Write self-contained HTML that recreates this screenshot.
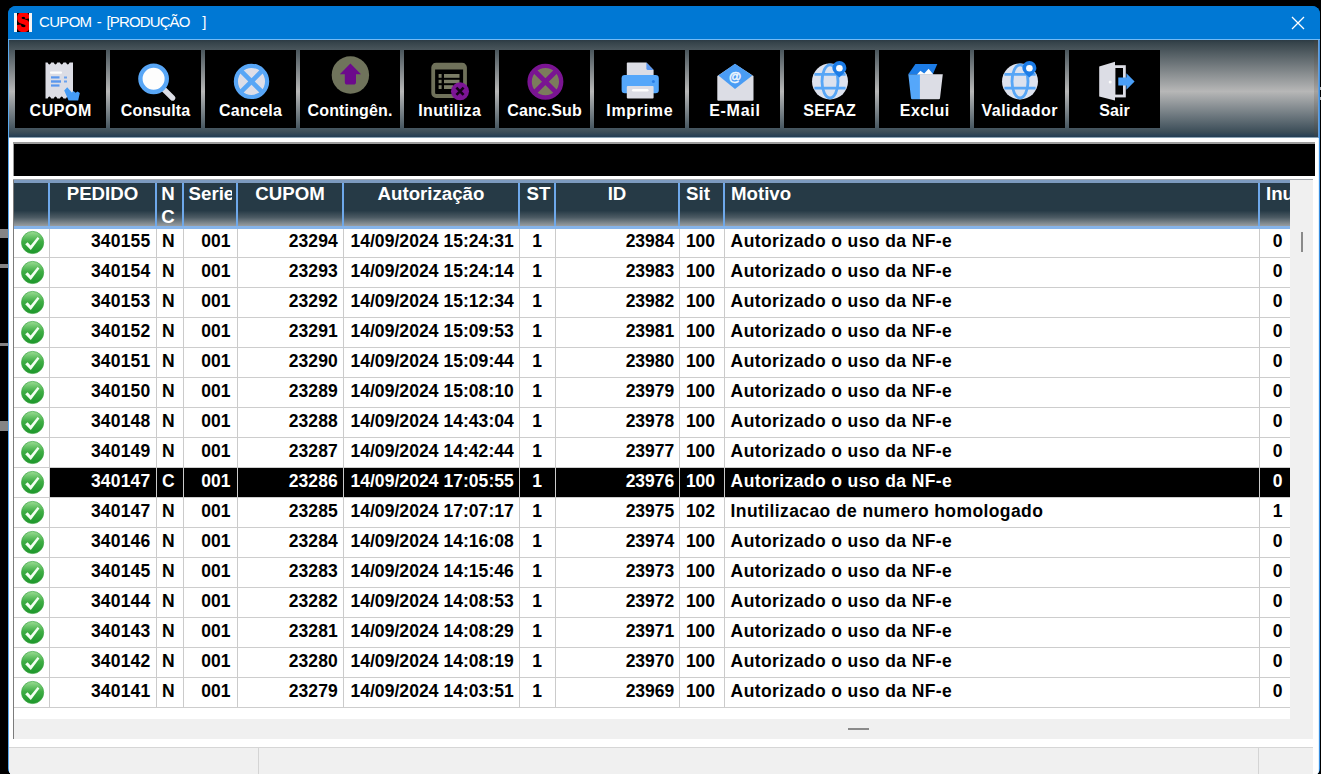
<!DOCTYPE html>
<html lang="pt-BR">
<head>
<meta charset="utf-8">
<title>CUPOM - [PRODUÇÃO   ]</title>
<style>
html,body{margin:0;padding:0;background:#000;}
body{width:1321px;height:774px;overflow:hidden;position:relative;font-family:"Liberation Sans",sans-serif;}
.bgm{position:absolute;left:0;width:8px;background:#858585;}
.bgr{position:absolute;left:1320px;width:1px;height:3px;background:#b8b8b8;}
.win{position:absolute;left:8px;top:6px;width:1312px;height:770px;border-radius:8px;overflow:hidden;background:#0078d4;}
.win>*{position:absolute;}
.titlebar{left:0;top:0;width:1312px;height:33px;background:#0078d4;}
.appico{position:absolute;left:6px;top:7px;width:18px;height:19px;background:#000;border-left:3px solid #f4f4f4;border-right:3px solid #f4f4f4;box-sizing:border-box;overflow:hidden;}
.appico span{position:absolute;left:-4px;top:-4px;width:20px;text-align:center;font:bold 25px/27px "Liberation Sans",sans-serif;color:#f00;-webkit-text-stroke:2.1px #f00;transform:scaleX(0.78);}
.title{position:absolute;left:31px;top:7px;font-size:15px;line-height:18px;color:#fff;white-space:pre;letter-spacing:-0.68px;word-spacing:1.9px;}
.close{position:absolute;left:1283px;top:10px;}
.tline{left:0;top:33px;width:1312px;height:1px;background:#74bbf5;}
.lbord{left:0;top:34px;width:1px;height:740px;background:#5aa9ee;}
.rbord{left:1310px;top:132px;width:1px;height:640px;background:#dff1fd;}
.rbord3{left:1310px;top:34px;width:1px;height:98px;background:#6a9fd6;}
.rbord2{left:1311px;top:34px;width:1px;height:740px;background:#3a8de0;}
.client{left:1px;top:34px;width:1310px;height:780px;background:#fff;}
.client>*{position:absolute;}
/* client origin = page (9,40) */
.toolbar{left:0;top:0;width:1310px;height:97px;background:linear-gradient(to bottom,#2c3b44 0%,#37454c 3%,#b7b7b7 53%,#3b4d58 95%,#233d54 100%);border-bottom:1px solid #8aa2b3;}
.toolbar:after{content:"";position:absolute;right:0;top:0;width:5px;height:97px;background:rgba(96,72,48,0.18);}
.tb{position:absolute;top:10px;height:78px;background:#000;}
.tb .ico{position:absolute;left:0;top:0;}
.tb .lbl{position:absolute;left:0;right:0;top:51.5px;text-align:center;color:#fff;font-weight:bold;font-size:16px;line-height:18px;white-space:nowrap;}
.blackbar{left:4px;top:102px;width:1301px;height:32px;background:#000;border-top:2px solid #9c9c9c;border-left:1px solid #9c9c9c;}
.grid{left:5px;top:140px;width:1299px;height:559px;background:#fff;}
.grid:before{content:"";position:absolute;left:-1px;top:-1px;width:1px;height:560px;background:#7c7c7c;}
.grid:after{content:"";position:absolute;left:-1px;top:-1px;width:1300px;height:1px;background:#a2a6ab;}
.grid>*{position:absolute;}
.ghead{left:0;top:0;width:1276px;height:49px;z-index:2;background:linear-gradient(to bottom,#263a46 0,#263a46 64%,#4b5a63 80%,#7a848a 92%,#999da0 100%);border-top:3px solid #7c9abf;border-bottom:3px solid #86b4ea;box-sizing:border-box;overflow:hidden;}
.hc{position:absolute;top:-1px;height:46px;overflow:hidden;color:#fff;font-weight:bold;font-size:18.67px;line-height:23px;text-align:center;white-space:nowrap;}
.hc span{display:block;margin-top:-0.4px;}
.hc.hl{text-align:left;}
.hc.hl span{padding-left:7px;}
.hd{position:absolute;top:-1px;width:2px;height:46px;background:#6ea8ea;}
.row{left:0;width:1276px;height:29px;border-bottom:1px solid #cdcdcd;font-weight:bold;font-size:17.5px;line-height:29px;color:#000;white-space:nowrap;}
.row.sel{color:#fff;}
.row.sel:before{content:"";position:absolute;left:36px;top:0;width:1240px;height:29px;background:#000;}
.row .chk{position:absolute;left:6px;top:2px;}
.c{position:absolute;top:-1.5px;}
.ped{right:1139.5px;letter-spacing:0.2px;}
.nc{left:148px;}
.ser{left:187.2px;}
.cup{right:952.2px;letter-spacing:0.1px;}
.aut{left:336.4px;letter-spacing:0.05px;}
.st{left:505px;width:36px;text-align:center;}
.idc{right:615.7px;}
.sit{left:664px;width:45px;text-align:center;}
.mot{left:716.6px;letter-spacing:0.40px;}
.inu{left:1245px;width:37px;text-align:center;}
.vd{top:48px;width:1px;height:479px;background:#cbcbcb;}
.vscroll{left:1276px;top:0;width:23px;height:539px;background:#f0f0f0;}
.vscroll i{position:absolute;left:11px;top:52px;width:2px;height:20px;background:#8a8a8a;}
.hscroll{left:0;top:539px;width:1299px;height:20px;background:#f0f0f0;}
.hscroll i{position:absolute;left:834px;top:9px;width:21px;height:2px;background:#8a8a8a;}
.status{left:0;top:707px;width:1304px;height:40px;background:#f0f0f0;border-top:1px solid #d6d6d6;}
.status i{position:absolute;top:0;width:1px;height:40px;background:#d4d4d4;}
</style>
</head>
<body>
<div class="bgm" style="top:229px;height:9px"></div><div class="bgm" style="top:264px;height:4px"></div><div class="bgm" style="top:343px;height:3px"></div><div class="bgm" style="top:421px;height:10px"></div><div class="bgr" style="top:87px"></div><div class="bgr" style="top:97px"></div>
<svg width="0" height="0" style="position:absolute"><defs><linearGradient id="gck" x1="0" y1="0" x2="0" y2="1"><stop offset="0" stop-color="#9bdc93"/><stop offset="0.45" stop-color="#3fae45"/><stop offset="1" stop-color="#1c962a"/></linearGradient></defs></svg>
<div class="win">
<div class="titlebar"><div class="appico"><span>S</span></div><div class="title">CUPOM - <span style="letter-spacing:-0.87px">[PRODUÇÃO</span><span style="word-spacing:0.75px">&nbsp;&nbsp; ]</span></div><svg class="close" width="14" height="14" viewBox="0 0 14 14"><path d="M1 1 L13 13 M13 1 L1 13" stroke="#fff" stroke-width="1.3" fill="none"/></svg></div>
<div class="tline"></div>
<div class="client">
<div class="toolbar">
<div class="tb" style="left:6px;width:91px"><svg class="ico" viewBox="15 50 91 78" width="91" height="78"><path d="M45.5 62.6 H47.6 Q49.4 66.4 51.2 62.6 H53.7 Q55.5 66.4 57.3 62.6 H59.9 Q61.7 66.4 63.5 62.6 H66 Q67.8 66.4 69.6 62.6 H73 V98.4 H69.6 Q67.8 94.8 66 98.4 H63.5 Q61.7 94.8 59.9 98.4 H57.3 Q55.5 94.8 53.7 98.4 H51.2 Q49.4 94.8 47.6 98.4 H45.5 Z" fill="#dcdde5"/><rect x="50" y="71.5" width="12" height="2.2" rx="1" fill="#fdfdfd"/><rect x="51" y="76.3" width="8.5" height="2.2" fill="#5a97ee"/><rect x="51" y="80.3" width="10" height="2.4" fill="#5a97ee"/><rect x="51" y="84.4" width="8.5" height="2.2" fill="#5a97ee"/><rect x="64" y="76.5" width="3" height="2" fill="#6aa2ee"/><rect x="64" y="80.5" width="3" height="2" fill="#6aa2ee"/><path d="M64.2 90.5 l3-3.2 l4.6 5.2 l1.6-1.4 l2.2 1.6 l2-1.2 l2.2 1.4 l-1.6 7.6 h-9.6 Z" fill="#459cf6"/></svg><span class="lbl" style="letter-spacing:0.57px;padding-left:0.57px">CUPOM</span></div>
<div class="tb" style="left:101px;width:91px"><svg class="ico" viewBox="110 50 91 78" width="91" height="78"><path d="M163.5 89 L172.6 98" stroke="#dcdde5" stroke-width="5.4" stroke-linecap="round"/><circle cx="153.6" cy="78.8" r="13.2" fill="#fdfdfd" stroke="#58a6f6" stroke-width="4.4"/></svg><span class="lbl" style="letter-spacing:0.13px;padding-left:0.13px">Consulta</span></div>
<div class="tb" style="left:196px;width:91px"><svg class="ico" viewBox="205 50 91 78" width="91" height="78"><circle cx="251.5" cy="81.4" r="15.6" fill="#dddee8" stroke="#58a6f6" stroke-width="4.2"/><path d="M241 70.9 L262 91.9 M262 70.9 L241 91.9" stroke="#58a6f6" stroke-width="4.6"/></svg><span class="lbl" style="letter-spacing:0.25px;padding-left:0.25px">Cancela</span></div>
<div class="tb" style="left:291px;width:100px"><svg class="ico" viewBox="300 50 100 78" width="100" height="78"><circle cx="350.4" cy="75" r="18.7" fill="#6f735b"/><path d="M350.4 63.6 L361 74.2 H356 V82 a2.6 2.6 0 0 1 -2.6 2.6 h-6 a2.6 2.6 0 0 1 -2.6 -2.6 V74.2 H339.8 Z" fill="#6c0a8c"/></svg><span class="lbl" style="letter-spacing:0.14px;padding-left:0.14px">Contingên.</span></div>
<div class="tb" style="left:395px;width:91px"><svg class="ico" viewBox="404 50 91 78" width="91" height="78"><rect x="433.2" y="64.6" width="31.8" height="31.4" rx="3" fill="#000" stroke="#6f715a" stroke-width="3.8"/><rect x="433" y="63" width="32" height="6.5" rx="2" fill="#6f715a"/><rect x="438.6" y="74" width="3" height="3.8" fill="#7b7d66"/><rect x="444" y="74" width="15.5" height="3.8" fill="#7b7d66"/><rect x="438.6" y="79.8" width="3" height="3.4" fill="#7b7d66"/><rect x="444" y="79.8" width="15.5" height="3.4" fill="#7b7d66"/><rect x="438.6" y="85.2" width="3" height="3.8" fill="#7b7d66"/><rect x="444" y="85.2" width="9" height="3.8" fill="#7b7d66"/><circle cx="460" cy="91.3" r="9" fill="#7c1496"/><path d="M456.4 87.7 L463.6 94.9 M463.6 87.7 L456.4 94.9" stroke="#140018" stroke-width="2.6"/></svg><span class="lbl" style="letter-spacing:0.39px;padding-left:0.39px">Inutiliza</span></div>
<div class="tb" style="left:490px;width:91px"><svg class="ico" viewBox="499 50 91 78" width="91" height="78"><circle cx="545.4" cy="81.7" r="15.8" fill="#7b7c5c" stroke="#7a1492" stroke-width="4.4"/><path d="M534.7 71 L556.1 92.4 M556.1 71 L534.7 92.4" stroke="#7a1492" stroke-width="4.8"/></svg><span class="lbl" style="letter-spacing:0.11px;padding-left:0.11px">Canc.Sub</span></div>
<div class="tb" style="left:585px;width:91px"><svg class="ico" viewBox="594 50 91 78" width="91" height="78"><path d="M626.8 63.4 a0.8 0.8 0 0 1 .8-.8 H646.4 L653.6 70 V77 H626.8 Z" fill="#dcdde5"/><path d="M646.4 62.6 V68.4 a1.6 1.6 0 0 0 1.6 1.6 H653.6 Z" fill="#5a97ee"/><rect x="621.6" y="75" width="37.2" height="18.2" rx="3.2" fill="#55a7fa"/><rect x="626.8" y="86" width="26.8" height="12.6" rx="1" fill="#dcdde5"/><rect x="632" y="89" width="16.5" height="2.4" rx="1.2" fill="#fdfdfd"/><circle cx="653.4" cy="81.4" r="1.5" fill="#2a7fe8"/></svg><span class="lbl" style="letter-spacing:0.68px;padding-left:0.68px">Imprime</span></div>
<div class="tb" style="left:680px;width:91px"><svg class="ico" viewBox="689 50 91 78" width="91" height="78"><path d="M717.3 76 L735 64 L753.5 76 V99.8 a1 1 0 0 1 -1 1 H718.3 a1 1 0 0 1 -1 -1 Z" fill="#dcdde5"/><path d="M735 63.8 L752.4 75.6 L735 89 L718.4 75.6 Z" fill="#4a9cf4"/><text x="735" y="81" font-family="'Liberation Sans',sans-serif" font-size="12.5" font-weight="bold" fill="#eef6ff" stroke="#eef6ff" stroke-width="0.45" text-anchor="middle">@</text></svg><span class="lbl" style="letter-spacing:0.72px;padding-left:0.72px">E-Mail</span></div>
<div class="tb" style="left:775px;width:91px"><svg class="ico" viewBox="784 50 91 78" width="91" height="78"><circle cx="830" cy="81.4" r="18" fill="#dde2ee"/><g fill="none" stroke="#58a6f6" stroke-width="2.8"><path d="M814.4 74.4 H845.6 M814.4 88.2 H845.6"/><ellipse cx="830" cy="81.4" rx="8" ry="16.5"/></g><path d="M839.4 61 a7 7 0 0 1 7 7 c0 4 -4.6 7 -7 9.6 c-2.4 -2.6 -7 -5.6 -7 -9.6 a7 7 0 0 1 7 -7 Z" fill="#1c7ce6"/><circle cx="839.4" cy="68.2" r="3.3" fill="#fdfdfd"/></svg><span class="lbl" style="letter-spacing:0.25px;padding-left:0.25px">SEFAZ</span></div>
<div class="tb" style="left:870px;width:91px"><svg class="ico" viewBox="879 50 91 78" width="91" height="78"><path d="M908.3 74.3 L915.4 64 H937.3 L932.8 74.3 Z" fill="#1c7ce6"/><path d="M908.3 74.3 H920 V99.2 H912.2 a1.2 1.2 0 0 1 -1.2 -1 Z" fill="#55a7fa"/><path d="M919.9 74.3 H942.8 L940 98.2 a1.2 1.2 0 0 1 -1.2 1 H919.9 Z" fill="#dcdde5"/><path d="M917 74.6 L920.4 70.8 L924.2 73.6 L928.6 68.8 L933.4 74.6 Z" fill="#fdfdfd"/></svg><span class="lbl" style="letter-spacing:0.46px;padding-left:0.46px">Exclui</span></div>
<div class="tb" style="left:965px;width:91px"><svg class="ico" viewBox="974 50 91 78" width="91" height="78"><circle cx="1020" cy="81.4" r="18" fill="#dde2ee"/><g fill="none" stroke="#58a6f6" stroke-width="2.8"><path d="M1004.4 74.4 H1035.6 M1004.4 88.2 H1035.6"/><ellipse cx="1020" cy="81.4" rx="8" ry="16.5"/></g><path d="M1029.4 61 a7 7 0 0 1 7 7 c0 4 -4.6 7 -7 9.6 c-2.4 -2.6 -7 -5.6 -7 -9.6 a7 7 0 0 1 7 -7 Z" fill="#1c7ce6"/><circle cx="1029.4" cy="68.2" r="3.3" fill="#fdfdfd"/></svg><span class="lbl" style="letter-spacing:0.5px;padding-left:0.5px">Validador</span></div>
<div class="tb" style="left:1060px;width:91px"><svg class="ico" viewBox="1069 50 91 78" width="91" height="78"><rect x="1114" y="66.6" width="10.4" height="29.4" fill="none" stroke="#dcdde5" stroke-width="2.8"/><path d="M1099.2 66.5 L1115 61.7 V100.5 L1099.2 96.6 Z" fill="#dcdde5"/><circle cx="1110.2" cy="82" r="1.5" fill="#fdfdfd"/><path d="M1118.3 77.6 H1126.4 V73.2 L1134.6 81.5 L1126.4 89.7 V85.6 H1118.3 Z" fill="#4a9ff8"/></svg><span class="lbl" style="letter-spacing:0.1px;padding-left:0.1px">Sair</span></div>
</div>
<div class="blackbar"></div>
<div class="grid">
<div class="ghead">
<div class="hc" style="left:0px;width:35px"><span></span></div><div class="hc" style="left:35px;width:107px"><span>PEDIDO</span></div><div class="hc" style="left:140.5px;width:27px"><span>N<br>C</span></div><div class="hc" style="left:169px;width:49px;text-align:left"><span style="padding-left:5.6px">Serie</span></div><div class="hc" style="left:223px;width:106px"><span>CUPOM</span></div><div class="hc" style="left:329px;width:176px"><span>Autorização</span></div><div class="hc" style="left:506.5px;width:36px"><span>ST</span></div><div class="hc" style="left:541px;width:124px"><span>ID</span></div><div class="hc" style="left:661.5px;width:45px"><span>Sit</span></div><div class="hc hl" style="left:710px;width:535px"><span>Motivo</span></div><div class="hc hl" style="left:1245px;width:31px"><span>Inu</span></div>
<i class="hd" style="left:34px"></i><i class="hd" style="left:141px"></i><i class="hd" style="left:168px"></i><i class="hd" style="left:222px"></i><i class="hd" style="left:328px"></i><i class="hd" style="left:504px"></i><i class="hd" style="left:540px"></i><i class="hd" style="left:664px"></i><i class="hd" style="left:709px"></i><i class="hd" style="left:1244px"></i>
</div>
<div class="row" style="top:48px"><svg class="chk" viewBox="0 0 26 26" width="26" height="26"><circle cx="12.6" cy="12.5" r="11.1" fill="url(#gck)" stroke="#3aa640" stroke-width="0.7"/><path d="M5.2 14.2 L7.6 12.2 L10.6 15.4 L17.6 7 L19.4 8.6 L10.8 20 Z" fill="#f4fff2"/></svg><span class="c ped">340155</span><span class="c nc">N</span><span class="c ser">001</span><span class="c cup">23294</span><span class="c aut">14/09/2024 15:24:31</span><span class="c st">1</span><span class="c idc">23984</span><span class="c sit">100</span><span class="c mot">Autorizado o uso da NF-e</span><span class="c inu">0</span></div>
<div class="row" style="top:78px"><svg class="chk" viewBox="0 0 26 26" width="26" height="26"><circle cx="12.6" cy="12.5" r="11.1" fill="url(#gck)" stroke="#3aa640" stroke-width="0.7"/><path d="M5.2 14.2 L7.6 12.2 L10.6 15.4 L17.6 7 L19.4 8.6 L10.8 20 Z" fill="#f4fff2"/></svg><span class="c ped">340154</span><span class="c nc">N</span><span class="c ser">001</span><span class="c cup">23293</span><span class="c aut">14/09/2024 15:24:14</span><span class="c st">1</span><span class="c idc">23983</span><span class="c sit">100</span><span class="c mot">Autorizado o uso da NF-e</span><span class="c inu">0</span></div>
<div class="row" style="top:108px"><svg class="chk" viewBox="0 0 26 26" width="26" height="26"><circle cx="12.6" cy="12.5" r="11.1" fill="url(#gck)" stroke="#3aa640" stroke-width="0.7"/><path d="M5.2 14.2 L7.6 12.2 L10.6 15.4 L17.6 7 L19.4 8.6 L10.8 20 Z" fill="#f4fff2"/></svg><span class="c ped">340153</span><span class="c nc">N</span><span class="c ser">001</span><span class="c cup">23292</span><span class="c aut">14/09/2024 15:12:34</span><span class="c st">1</span><span class="c idc">23982</span><span class="c sit">100</span><span class="c mot">Autorizado o uso da NF-e</span><span class="c inu">0</span></div>
<div class="row" style="top:138px"><svg class="chk" viewBox="0 0 26 26" width="26" height="26"><circle cx="12.6" cy="12.5" r="11.1" fill="url(#gck)" stroke="#3aa640" stroke-width="0.7"/><path d="M5.2 14.2 L7.6 12.2 L10.6 15.4 L17.6 7 L19.4 8.6 L10.8 20 Z" fill="#f4fff2"/></svg><span class="c ped">340152</span><span class="c nc">N</span><span class="c ser">001</span><span class="c cup">23291</span><span class="c aut">14/09/2024 15:09:53</span><span class="c st">1</span><span class="c idc">23981</span><span class="c sit">100</span><span class="c mot">Autorizado o uso da NF-e</span><span class="c inu">0</span></div>
<div class="row" style="top:168px"><svg class="chk" viewBox="0 0 26 26" width="26" height="26"><circle cx="12.6" cy="12.5" r="11.1" fill="url(#gck)" stroke="#3aa640" stroke-width="0.7"/><path d="M5.2 14.2 L7.6 12.2 L10.6 15.4 L17.6 7 L19.4 8.6 L10.8 20 Z" fill="#f4fff2"/></svg><span class="c ped">340151</span><span class="c nc">N</span><span class="c ser">001</span><span class="c cup">23290</span><span class="c aut">14/09/2024 15:09:44</span><span class="c st">1</span><span class="c idc">23980</span><span class="c sit">100</span><span class="c mot">Autorizado o uso da NF-e</span><span class="c inu">0</span></div>
<div class="row" style="top:198px"><svg class="chk" viewBox="0 0 26 26" width="26" height="26"><circle cx="12.6" cy="12.5" r="11.1" fill="url(#gck)" stroke="#3aa640" stroke-width="0.7"/><path d="M5.2 14.2 L7.6 12.2 L10.6 15.4 L17.6 7 L19.4 8.6 L10.8 20 Z" fill="#f4fff2"/></svg><span class="c ped">340150</span><span class="c nc">N</span><span class="c ser">001</span><span class="c cup">23289</span><span class="c aut">14/09/2024 15:08:10</span><span class="c st">1</span><span class="c idc">23979</span><span class="c sit">100</span><span class="c mot">Autorizado o uso da NF-e</span><span class="c inu">0</span></div>
<div class="row" style="top:228px"><svg class="chk" viewBox="0 0 26 26" width="26" height="26"><circle cx="12.6" cy="12.5" r="11.1" fill="url(#gck)" stroke="#3aa640" stroke-width="0.7"/><path d="M5.2 14.2 L7.6 12.2 L10.6 15.4 L17.6 7 L19.4 8.6 L10.8 20 Z" fill="#f4fff2"/></svg><span class="c ped">340148</span><span class="c nc">N</span><span class="c ser">001</span><span class="c cup">23288</span><span class="c aut">14/09/2024 14:43:04</span><span class="c st">1</span><span class="c idc">23978</span><span class="c sit">100</span><span class="c mot">Autorizado o uso da NF-e</span><span class="c inu">0</span></div>
<div class="row" style="top:258px"><svg class="chk" viewBox="0 0 26 26" width="26" height="26"><circle cx="12.6" cy="12.5" r="11.1" fill="url(#gck)" stroke="#3aa640" stroke-width="0.7"/><path d="M5.2 14.2 L7.6 12.2 L10.6 15.4 L17.6 7 L19.4 8.6 L10.8 20 Z" fill="#f4fff2"/></svg><span class="c ped">340149</span><span class="c nc">N</span><span class="c ser">001</span><span class="c cup">23287</span><span class="c aut">14/09/2024 14:42:44</span><span class="c st">1</span><span class="c idc">23977</span><span class="c sit">100</span><span class="c mot">Autorizado o uso da NF-e</span><span class="c inu">0</span></div>
<div class="row sel" style="top:288px"><svg class="chk" viewBox="0 0 26 26" width="26" height="26"><circle cx="12.6" cy="12.5" r="11.1" fill="url(#gck)" stroke="#3aa640" stroke-width="0.7"/><path d="M5.2 14.2 L7.6 12.2 L10.6 15.4 L17.6 7 L19.4 8.6 L10.8 20 Z" fill="#f4fff2"/></svg><span class="c ped">340147</span><span class="c nc">C</span><span class="c ser">001</span><span class="c cup">23286</span><span class="c aut">14/09/2024 17:05:55</span><span class="c st">1</span><span class="c idc">23976</span><span class="c sit">100</span><span class="c mot">Autorizado o uso da NF-e</span><span class="c inu">0</span></div>
<div class="row" style="top:318px"><svg class="chk" viewBox="0 0 26 26" width="26" height="26"><circle cx="12.6" cy="12.5" r="11.1" fill="url(#gck)" stroke="#3aa640" stroke-width="0.7"/><path d="M5.2 14.2 L7.6 12.2 L10.6 15.4 L17.6 7 L19.4 8.6 L10.8 20 Z" fill="#f4fff2"/></svg><span class="c ped">340147</span><span class="c nc">N</span><span class="c ser">001</span><span class="c cup">23285</span><span class="c aut">14/09/2024 17:07:17</span><span class="c st">1</span><span class="c idc">23975</span><span class="c sit">102</span><span class="c mot">Inutilizacao de numero homologado</span><span class="c inu">1</span></div>
<div class="row" style="top:348px"><svg class="chk" viewBox="0 0 26 26" width="26" height="26"><circle cx="12.6" cy="12.5" r="11.1" fill="url(#gck)" stroke="#3aa640" stroke-width="0.7"/><path d="M5.2 14.2 L7.6 12.2 L10.6 15.4 L17.6 7 L19.4 8.6 L10.8 20 Z" fill="#f4fff2"/></svg><span class="c ped">340146</span><span class="c nc">N</span><span class="c ser">001</span><span class="c cup">23284</span><span class="c aut">14/09/2024 14:16:08</span><span class="c st">1</span><span class="c idc">23974</span><span class="c sit">100</span><span class="c mot">Autorizado o uso da NF-e</span><span class="c inu">0</span></div>
<div class="row" style="top:378px"><svg class="chk" viewBox="0 0 26 26" width="26" height="26"><circle cx="12.6" cy="12.5" r="11.1" fill="url(#gck)" stroke="#3aa640" stroke-width="0.7"/><path d="M5.2 14.2 L7.6 12.2 L10.6 15.4 L17.6 7 L19.4 8.6 L10.8 20 Z" fill="#f4fff2"/></svg><span class="c ped">340145</span><span class="c nc">N</span><span class="c ser">001</span><span class="c cup">23283</span><span class="c aut">14/09/2024 14:15:46</span><span class="c st">1</span><span class="c idc">23973</span><span class="c sit">100</span><span class="c mot">Autorizado o uso da NF-e</span><span class="c inu">0</span></div>
<div class="row" style="top:408px"><svg class="chk" viewBox="0 0 26 26" width="26" height="26"><circle cx="12.6" cy="12.5" r="11.1" fill="url(#gck)" stroke="#3aa640" stroke-width="0.7"/><path d="M5.2 14.2 L7.6 12.2 L10.6 15.4 L17.6 7 L19.4 8.6 L10.8 20 Z" fill="#f4fff2"/></svg><span class="c ped">340144</span><span class="c nc">N</span><span class="c ser">001</span><span class="c cup">23282</span><span class="c aut">14/09/2024 14:08:53</span><span class="c st">1</span><span class="c idc">23972</span><span class="c sit">100</span><span class="c mot">Autorizado o uso da NF-e</span><span class="c inu">0</span></div>
<div class="row" style="top:438px"><svg class="chk" viewBox="0 0 26 26" width="26" height="26"><circle cx="12.6" cy="12.5" r="11.1" fill="url(#gck)" stroke="#3aa640" stroke-width="0.7"/><path d="M5.2 14.2 L7.6 12.2 L10.6 15.4 L17.6 7 L19.4 8.6 L10.8 20 Z" fill="#f4fff2"/></svg><span class="c ped">340143</span><span class="c nc">N</span><span class="c ser">001</span><span class="c cup">23281</span><span class="c aut">14/09/2024 14:08:29</span><span class="c st">1</span><span class="c idc">23971</span><span class="c sit">100</span><span class="c mot">Autorizado o uso da NF-e</span><span class="c inu">0</span></div>
<div class="row" style="top:468px"><svg class="chk" viewBox="0 0 26 26" width="26" height="26"><circle cx="12.6" cy="12.5" r="11.1" fill="url(#gck)" stroke="#3aa640" stroke-width="0.7"/><path d="M5.2 14.2 L7.6 12.2 L10.6 15.4 L17.6 7 L19.4 8.6 L10.8 20 Z" fill="#f4fff2"/></svg><span class="c ped">340142</span><span class="c nc">N</span><span class="c ser">001</span><span class="c cup">23280</span><span class="c aut">14/09/2024 14:08:19</span><span class="c st">1</span><span class="c idc">23970</span><span class="c sit">100</span><span class="c mot">Autorizado o uso da NF-e</span><span class="c inu">0</span></div>
<div class="row" style="top:498px"><svg class="chk" viewBox="0 0 26 26" width="26" height="26"><circle cx="12.6" cy="12.5" r="11.1" fill="url(#gck)" stroke="#3aa640" stroke-width="0.7"/><path d="M5.2 14.2 L7.6 12.2 L10.6 15.4 L17.6 7 L19.4 8.6 L10.8 20 Z" fill="#f4fff2"/></svg><span class="c ped">340141</span><span class="c nc">N</span><span class="c ser">001</span><span class="c cup">23279</span><span class="c aut">14/09/2024 14:03:51</span><span class="c st">1</span><span class="c idc">23969</span><span class="c sit">100</span><span class="c mot">Autorizado o uso da NF-e</span><span class="c inu">0</span></div>
<i class="vd" style="left:35px"></i><i class="vd" style="left:142px"></i><i class="vd" style="left:169px"></i><i class="vd" style="left:223px"></i><i class="vd" style="left:329px"></i><i class="vd" style="left:505px"></i><i class="vd" style="left:541px"></i><i class="vd" style="left:665px"></i><i class="vd" style="left:710px"></i><i class="vd" style="left:1245px"></i>
<div class="vscroll"><i></i></div><div class="hscroll"><i></i></div>
</div>
<div class="status"><i style="left:249px"></i><i style="left:1249px"></i></div>
</div>
<div class="lbord"></div><div class="rbord"></div><div class="rbord2"></div><div class="rbord3"></div>
</div>
</body>
</html>
